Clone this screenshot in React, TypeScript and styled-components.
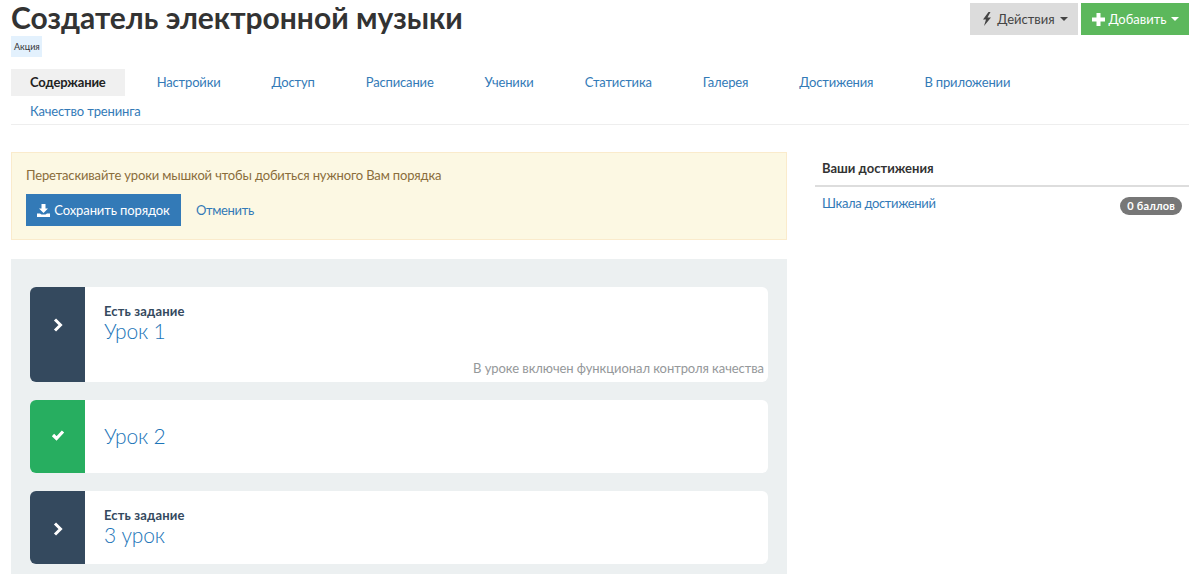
import React from "react";
import styled, { createGlobalStyle } from "styled-components";

const FONT = `Lato, "Open Sans", sans-serif`;

const GlobalStyle = createGlobalStyle`
  html, body {
    margin: 0;
    padding: 0;
    background: #fff;
    overflow: hidden;
  }
  body {
    font-family: ${FONT};
    font-size: 13px;
    color: #333;
  }
  * {
    box-sizing: border-box;
  }
`;

const TABS = [
  "Содержание",
  "Настройки",
  "Доступ",
  "Расписание",
  "Ученики",
  "Статистика",
  "Галерея",
  "Достижения",
  "В приложении",
  "Качество тренинга",
];

const LESSONS = [
  { id: 1, title: "Урок 1", task: true, done: false, note: "В уроке включен функционал контроля качества" },
  { id: 2, title: "Урок 2", task: false, done: true, note: "" },
  { id: 3, title: "3 урок", task: true, done: false, note: "" },
];

const BoltIcon = () => (
  <svg width="10" height="14" viewBox="0 0 10 14">
    <path d="M6.5 0 L1 7.5 H4 L2 14 L9 5.5 H5.5 L8.5 0 Z" fill="currentColor" />
  </svg>
);

const PlusIcon = () => (
  <svg width="13" height="13" viewBox="0 0 13 13">
    <path d="M4.5 0 H8.5 V4.5 H13 V8.5 H8.5 V13 H4.5 V8.5 H0 V4.5 H4.5 Z" fill="currentColor" />
  </svg>
);

const DownloadIcon = () => (
  <svg width="13" height="13" viewBox="0 0 13 13">
    <path d="M4.5 0 H8.5 V4.5 H11 L6.5 9 L2 4.5 H4.5 Z M0 9.5 H3 L4.5 10.5 H8.5 L10 9.5 H13 V13 H0 Z" fill="currentColor" />
  </svg>
);

const ChevronIcon = () => (
  <svg width="10" height="14" viewBox="0 0 10 14">
    <polyline points="2,1.5 7.5,7 2,12.5" fill="none" stroke="currentColor" strokeWidth="3" />
  </svg>
);

const CheckIcon = () => (
  <svg width="14" height="12" viewBox="0 0 14 12">
    <polyline points="2,6 5.5,9.5 12,2.5" fill="none" stroke="currentColor" strokeWidth="3.2" />
  </svg>
);

export default function App() {
  return (
    <Page>
      <GlobalStyle />
      <Header>
        <div>
          <Title>Создатель электронной музыки</Title>
          <Tag>Акция</Tag>
        </div>
        <Actions>
          <ActionButton>
            <BoltIcon /> Действия <Caret />
          </ActionButton>
          <ActionButton $green>
            <PlusIcon /> Добавить <Caret />
          </ActionButton>
        </Actions>
      </Header>

      <Tabs>
        {TABS.map((tab, index) => (
          <Tab key={tab} $active={index === 0}>
            {tab}
          </Tab>
        ))}
      </Tabs>

      <Columns>
        <Main>
          <Alert>
            <AlertText>Перетаскивайте уроки мышкой чтобы добиться нужного Вам порядка</AlertText>
            <AlertRow>
              <SaveButton>
                <DownloadIcon /> Сохранить порядок
              </SaveButton>
              <Link>Отменить</Link>
            </AlertRow>
          </Alert>

          <LessonList>
            {LESSONS.map(lesson => (
              <LessonCard key={lesson.id} $tall={!!lesson.note}>
                <LessonIcon $done={lesson.done}>
                  {lesson.done ? <CheckIcon /> : <ChevronIcon />}
                </LessonIcon>
                <LessonBody $center={!lesson.task}>
                  {lesson.task && <LessonTask>Есть задание</LessonTask>}
                  <LessonTitle>{lesson.title}</LessonTitle>
                  {lesson.note && <LessonNote>{lesson.note}</LessonNote>}
                </LessonBody>
              </LessonCard>
            ))}
          </LessonList>
        </Main>

        <Side>
          <SideTitle>Ваши достижения</SideTitle>
          <SideRow>
            <Link>Шкала достижений</Link>
            <Badge>0 баллов</Badge>
          </SideRow>
        </Side>
      </Columns>
    </Page>
  );
}

const Page = styled.div`
  padding: 0 10px 0 11px;
  height: 574px;
  overflow: hidden;
`;

const Header = styled.div`
  display: flex;
  justify-content: space-between;
  align-items: flex-start;
  height: 69px;
`;

const Title = styled.h1`
  margin: 0 0 2px;
  font-size: 30px;
  line-height: 34px;
  font-weight: 700;
  color: #333;
`;

const Tag = styled.span`
  display: inline-block;
  height: 21px;
  padding: 0 2px 0 3px;
  font-size: 9px;
  line-height: 21px;
  color: #333;
  background: #e3f1fd;
`;

const Actions = styled.div`
  display: flex;
  gap: 3px;
  padding-top: 3px;
`;

const ActionButton = styled.button<{ $green?: boolean }>`
  display: flex;
  align-items: center;
  justify-content: center;
  gap: ${p => (p.$green ? 4 : 5)}px;
  width: 108px;
  height: 32px;
  padding: 0 0 0 ${p => (p.$green ? 0 : 2)}px;
  border: 0;
  font-family: ${FONT};
  font-size: 13px;
  color: ${p => (p.$green ? "#fff" : "#444")};
  background: ${p => (p.$green ? "#5cb85c" : "#dcdcdc")};
`;

const Caret = styled.span`
  width: 0;
  height: 0;
  border-top: 4px solid currentColor;
  border-left: 4px solid transparent;
  border-right: 4px solid transparent;
`;

const Tabs = styled.div`
  display: flex;
  flex-wrap: wrap;
  align-content: flex-start;
  column-gap: 13px;
  row-gap: 2px;
  border-bottom: 1px solid #eee;
  width: 1178px;
  height: 56px;
`;

const Tab = styled.a<{ $active?: boolean }>`
  height: 27px;
  padding: 0 19px;
  font-size: 13px;
  line-height: 26px;
  letter-spacing: -0.15px;
  font-weight: ${p => (p.$active ? 700 : 400)};
  color: ${p => (p.$active ? "#222" : "#337ab7")};
  background: ${p => (p.$active ? "#f0f0f0" : "transparent")};
`;

const Columns = styled.div`
  display: grid;
  grid-template-columns: 776px 374px;
  column-gap: 28px;
  padding-top: 27px;
`;

const Main = styled.div`
  display: flex;
  flex-direction: column;
  gap: 19px;
`;

const Alert = styled.div`
  height: 88px;
  padding: 13px 14px;
  color: #8a6d3b;
  background: #fcf8e3;
  border: 1px solid #faebcc;
`;

const AlertText = styled.div`
  font-size: 13px;
  line-height: 18px;
  letter-spacing: -0.15px;
`;

const AlertRow = styled.div`
  display: flex;
  align-items: center;
  gap: 15px;
  margin-top: 10px;
`;

const SaveButton = styled.button`
  display: flex;
  align-items: center;
  justify-content: center;
  gap: 4px;
  width: 155px;
  height: 32px;
  padding: 0;
  border: 0;
  font-family: ${FONT};
  font-size: 13px;
  letter-spacing: -0.1px;
  color: #fff;
  background: #337ab7;
`;

const Link = styled.a`
  font-size: 13px;
  letter-spacing: -0.35px;
  color: #337ab7;
`;

const LessonList = styled.div`
  display: flex;
  flex-direction: column;
  gap: 18px;
  padding: 28px 19px;
  background: #ecf0f1;
`;

const LessonCard = styled.div<{ $tall?: boolean }>`
  display: flex;
  height: ${p => (p.$tall ? 95 : 73)}px;
  overflow: hidden;
  background: #fff;
  border-radius: 6px;
`;

const LessonIcon = styled.div<{ $done?: boolean }>`
  flex: 0 0 55px;
  display: flex;
  justify-content: center;
  align-items: flex-start;
  padding-top: ${p => (p.$done ? 29 : 31)}px;
  color: #fff;
  background: ${p => (p.$done ? "#27ae60" : "#34495e")};
`;

const LessonBody = styled.div<{ $center?: boolean }>`
  position: relative;
  flex: 1;
  display: flex;
  flex-direction: column;
  justify-content: ${p => (p.$center ? "center" : "flex-start")};
  padding: ${p => (p.$center ? "0 19px 2px" : "16px 19px 0")};
`;

const LessonTask = styled.div`
  font-size: 13px;
  line-height: 16px;
  font-weight: 700;
  letter-spacing: 0.15px;
  color: #34495e;
`;

const LessonTitle = styled.div`
  font-size: 21px;
  line-height: 23px;
  font-weight: 300;
  letter-spacing: -0.2px;
  color: #1c75b8;
`;

const LessonNote = styled.div`
  position: absolute;
  right: 4px;
  bottom: 6px;
  font-size: 13px;
  line-height: 15px;
  letter-spacing: -0.07px;
  color: #95989a;
`;

const Side = styled.div`
  font-size: 13px;
`;

const SideTitle = styled.div`
  height: 35px;
  padding: 7px 7px 0;
  font-size: 13px;
  line-height: 18px;
  font-weight: 700;
  color: #333;
  border-bottom: 2px solid #ddd;
`;

const SideRow = styled.div`
  display: flex;
  justify-content: space-between;
  padding: 8px 7px 0;
`;

const Badge = styled.span`
  height: 18px;
  margin-top: 2px;
  padding: 0 7px;
  font-size: 11px;
  line-height: 18px;
  font-weight: 700;
  letter-spacing: 0.2px;
  color: #fff;
  background: #777;
  border-radius: 10px;
`;
